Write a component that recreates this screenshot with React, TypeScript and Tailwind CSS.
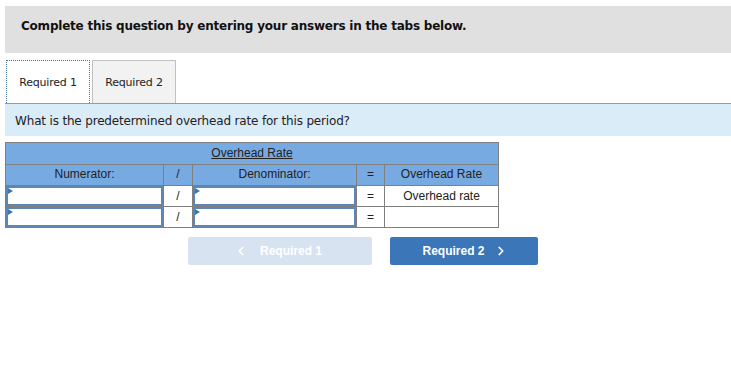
import { ChevronLeft, ChevronRight } from 'lucide-react';

const verdana = { fontFamily: '"DejaVu Sans", Verdana, sans-serif' };

function InputCell() {
  return (
    <td className="border border-[#7f7f7f] p-0 bg-white">
      <div className="relative h-[20px] border-2 border-[#5d86b5] bg-white">
        <span className="absolute left-0 top-0 w-0 h-0 border-t-[3px] border-b-[3px] border-l-[5px] border-t-transparent border-b-transparent border-l-[#3a76b8]" />
      </div>
    </td>
  );
}

function App() {
  return (
    <div className="w-[731px] h-[369px] bg-white overflow-hidden">
      {/* instructions bar */}
      <div className="pl-[5px] pt-[6px]">
        <div className="h-[47px] bg-[#e0e0e0] flex items-center pl-[16px] pb-[8px]">
          <span style={verdana} className="text-[12px] font-bold text-[#111] tracking-[-0.22px]">
            Complete this question by entering your answers in the tabs below.
          </span>
        </div>
      </div>

      {/* tabs */}
      <div className="ml-[5px] mt-[7px] flex items-end h-[44px] border-b border-[#999]">
        <div style={verdana} className="ml-[1px] w-[84px] h-[43px] pt-[2px] bg-white border border-dotted border-[#4a6fa5] border-b-0 flex items-center justify-center text-[11px] text-[#222] tracking-[-0.2px]">
          Required 1
        </div>
        <div style={verdana} className="ml-[2px] w-[84px] h-[43px] pt-[2px] bg-[#f2f2f2] border border-[#c0c0c0] border-b-0 flex items-center justify-center text-[11px] text-[#222] tracking-[-0.2px]">
          Required 2
        </div>
      </div>

      {/* question */}
      <div className="ml-[5px] h-[32px] bg-[#dbecf9] flex items-center pl-[10px] pt-[1px]">
        <span style={verdana} className="text-[12px] text-[#222] tracking-[-0.17px]">
          What is the predetermined overhead rate for this period?
        </span>
      </div>

      {/* table */}
      <div className="ml-[5px] mt-[6px]" style={{ fontFamily: '"Liberation Sans", Arial, sans-serif' }}>
        <table className="border-collapse text-[12px] text-[#222]">
          <colgroup>
            <col className="w-[158px]" />
            <col className="w-[29px]" />
            <col className="w-[164px]" />
            <col className="w-[28px]" />
            <col className="w-[114px]" />
          </colgroup>
          <thead>
            <tr className="h-[22px] bg-[#78aae2]">
              <th colSpan={5} className="border border-[#7f7f7f] font-normal underline p-0 align-bottom pb-[2px]">
                Overhead Rate
              </th>
            </tr>
            <tr className="h-[21px] bg-[#78aae2]">
              <th className="border border-[#7f7f7f] font-normal p-0 pb-[2px]">Numerator:</th>
              <th className="border border-[#7f7f7f] font-normal p-0 pb-[2px]">/</th>
              <th className="border border-[#7f7f7f] font-normal p-0 pb-[2px]">Denominator:</th>
              <th className="border border-[#7f7f7f] font-normal p-0 pb-[2px]">=</th>
              <th className="border border-[#7f7f7f] font-normal p-0 pb-[2px]">Overhead Rate</th>
            </tr>
          </thead>
          <tbody>
            <tr className="h-[21px]">
              <InputCell />
              <td className="border border-[#7f7f7f] p-0 text-center">/</td>
              <InputCell />
              <td className="border border-[#7f7f7f] p-0 text-center">=</td>
              <td className="border border-[#7f7f7f] p-0 text-center">Overhead rate</td>
            </tr>
            <tr className="h-[21px]">
              <InputCell />
              <td className="border border-[#7f7f7f] p-0 text-center">/</td>
              <InputCell />
              <td className="border border-[#7f7f7f] p-0 text-center">=</td>
              <td className="border border-[#7f7f7f] p-0 text-center"></td>
            </tr>
          </tbody>
        </table>

        {/* nav buttons */}
        <div className="mt-[9px] ml-[183px] flex gap-[18px]">
          <button className="w-[184px] h-[28px] rounded-[2px] bg-[#d7e3f0] text-white font-bold text-[12px] flex items-center justify-center gap-[12px] pr-[4px]">
            <ChevronLeft size={14} strokeWidth={3} />
            Required 1
          </button>
          <button className="w-[148px] h-[28px] rounded-[2px] bg-[#3a76b8] text-white font-bold text-[12px] flex items-center justify-center gap-[9px] pl-[2px]">
            Required 2
            <ChevronRight size={14} strokeWidth={3} />
          </button>
        </div>
      </div>
    </div>
  );
}

export default App;
